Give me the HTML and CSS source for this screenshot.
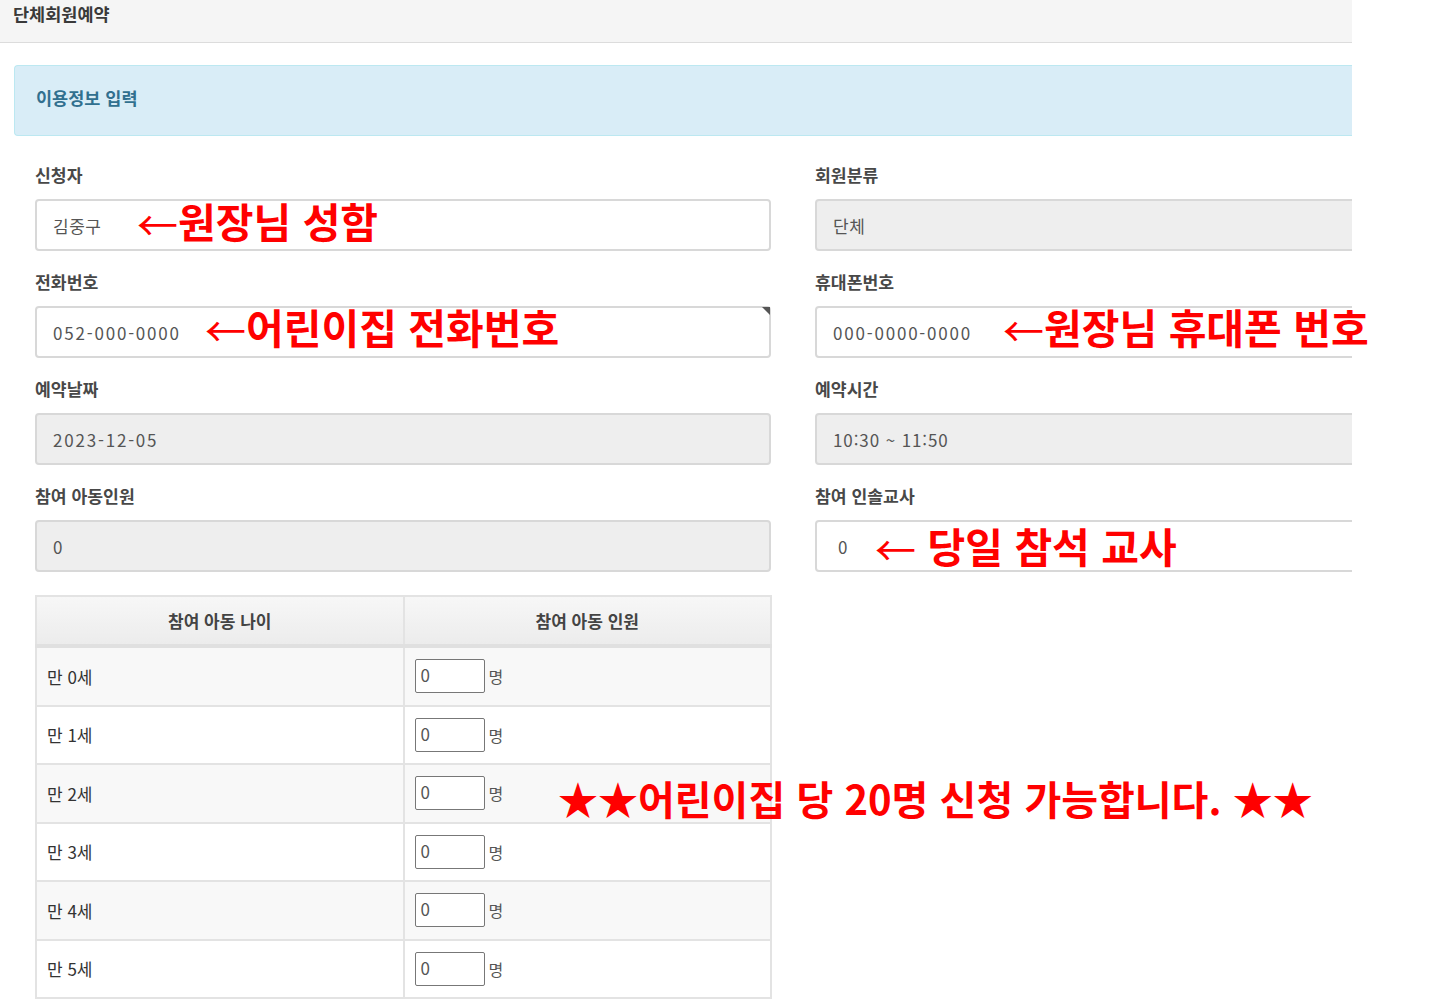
FILE: index.html
```html
<!DOCTYPE html>
<html lang="ko">
<head>
<meta charset="utf-8">
<title>단체회원예약</title>
<link rel="stylesheet" href="styles.css">
</head>
<body>
<div class="page">
  <div class="frame">
    <header class="topbar"><h1 class="topbar-title">단체회원예약</h1></header>
    <div class="content">
      <div class="panel-heading">이용정보 입력</div>
      <div class="form-grid">
        <div class="group"><label class="label">신청자</label><div class="field">김중구</div></div>
        <div class="group"><label class="label">회원분류</label><div class="field disabled">단체</div></div>
        <div class="group"><label class="label">전화번호</label><div class="field digits corner">052-000-0000</div></div>
        <div class="group"><label class="label">휴대폰번호</label><div class="field digits">000-0000-0000</div></div>
        <div class="group"><label class="label">예약날짜</label><div class="field digits disabled">2023-12-05</div></div>
        <div class="group"><label class="label">예약시간</label><div class="field digits time disabled">10:30 ~ 11:50</div></div>
        <div class="group"><label class="label">참여 아동인원</label><div class="field disabled">0</div></div>
        <div class="group"><label class="label">참여 인솔교사</label><div class="field teacher">0</div></div>
      </div>
      <table class="age-table">
        <thead>
          <tr><th>참여 아동 나이</th><th>참여 아동 인원</th></tr>
        </thead>
        <tbody>
          <tr><td>만 0세</td><td><span class="num">0</span><span class="unit">명</span></td></tr>
          <tr><td>만 1세</td><td><span class="num">0</span><span class="unit">명</span></td></tr>
          <tr><td>만 2세</td><td><span class="num">0</span><span class="unit">명</span></td></tr>
          <tr><td>만 3세</td><td><span class="num">0</span><span class="unit">명</span></td></tr>
          <tr><td>만 4세</td><td><span class="num">0</span><span class="unit">명</span></td></tr>
          <tr><td>만 5세</td><td><span class="num">0</span><span class="unit">명</span></td></tr>
        </tbody>
      </table>
    </div>
  </div>
  <span class="note note-name"><span class="arrow">←</span>원장님 성함</span>
  <span class="note note-tel"><span class="arrow">←</span>어린이집 전화번호</span>
  <span class="note note-mobile"><span class="arrow">←</span>원장님 휴대폰 번호</span>
  <span class="note note-teacher"><span class="arrow">←</span> 당일 참석 교사</span>
  <span class="note note-limit">★★어린이집 당 20명 신청 가능합니다. ★★</span>
</div>
</body>
</html>
```

FILE: styles.css
```css
html, body {
  margin: 0;
  padding: 0;
  background: #fff;
}
body {
  font-family: "Noto Sans CJK KR", "Noto Sans", sans-serif;
  color: #333;
}
.page {
  position: relative;
  width: 1431px;
  height: 1004px;
  overflow: hidden;
}
.frame {
  width: 1352px;
  overflow: hidden;
}
.topbar {
  height: 42px;
  background: #f5f5f5;
  border-bottom: 1px solid #dcdcdc;
  display: flex;
  align-items: center;
  padding-left: 13px;
}
.topbar-title {
  margin: 0;
  margin-top: -15px;
  font-size: 17.5px;
  font-weight: 700;
  color: #3a3a3a;
}
.content {
  padding: 22px 0 0 14px;
}
.panel-heading {
  box-sizing: border-box;
  height: 71px;
  background: #d9edf7;
  border: 1px solid #bce8f1;
  border-right: none;
  border-radius: 4px 0 0 4px;
  color: #31708f;
  font-size: 17.5px;
  font-weight: 700;
  display: flex;
  align-items: center;
  padding-left: 21px;
  padding-bottom: 6px;
}
.form-grid {
  margin: 27px 0 0 21px;
  display: grid;
  grid-template-columns: 736px 736px;
  column-gap: 44px;
  row-gap: 19px;
}
.group {
  display: flex;
  flex-direction: column;
}
.label {
  height: 24px;
  line-height: 24px;
  font-size: 17.2px;
  font-weight: 700;
  color: #484848;
  margin-bottom: 12px;
}
.field {
  position: relative;
  box-sizing: border-box;
  height: 52px;
  border: 2px solid #d8d8d8;
  border-radius: 4px;
  background: #fff;
  padding-left: 16px;
  display: flex;
  align-items: center;
  font-size: 17px;
  letter-spacing: 0.5px;
  color: #555;
}
.field.digits {
  letter-spacing: 1.8px;
}
.field.time {
  letter-spacing: 0.9px;
}
.field.teacher {
  padding-left: 21px;
}
.field.disabled {
  background: #eee;
}
.field.corner::after {
  content: "";
  position: absolute;
  top: -1px;
  right: -1px;
  width: 0;
  height: 0;
  border-top: 8px solid #555;
  border-left: 8px solid transparent;
}
.age-table {
  margin: 23px 0 0 21px;
  width: 737px;
  border-collapse: collapse;
  table-layout: fixed;
  font-size: 17px;
}
.age-table th,
.age-table td {
  border: 2px solid #e3e3e3;
}
.age-table th {
  height: 45px;
  background: linear-gradient(#f7f7f7, #ececec);
  border-bottom: 4px solid #e0e0e0;
  font-weight: 700;
  color: #444;
}
.age-table td {
  height: 56.5px;
  padding: 0 10px;
  color: #333;
}
.age-table tbody tr:nth-child(odd) td {
  background: #f8f8f8;
}
.num {
  display: inline-flex;
  align-items: center;
  vertical-align: middle;
  box-sizing: border-box;
  width: 70px;
  height: 34px;
  border: 1px solid #777;
  border-radius: 2px;
  background: #fff;
  padding-left: 5px;
  padding-bottom: 3px;
  color: #555;
  font-size: 17px;
}
.unit {
  vertical-align: middle;
  margin-left: 4px;
  font-size: 16px;
  color: #555;
}
.note {
  position: absolute;
  color: #ff0000;
  font-weight: 700;
  font-size: 41px;
  line-height: 1;
  white-space: nowrap;
}
.arrow {
  font-weight: 400;
  vertical-align: -3px;
}
.note-name { left: 137px; top: 200px; }
.note-tel { left: 205px; top: 306px; }
.note-mobile { left: 1003px; top: 306px; }
.note-teacher { left: 875px; top: 525px; }
.note-limit { left: 558px; top: 778px; font-size: 40px; }
```
